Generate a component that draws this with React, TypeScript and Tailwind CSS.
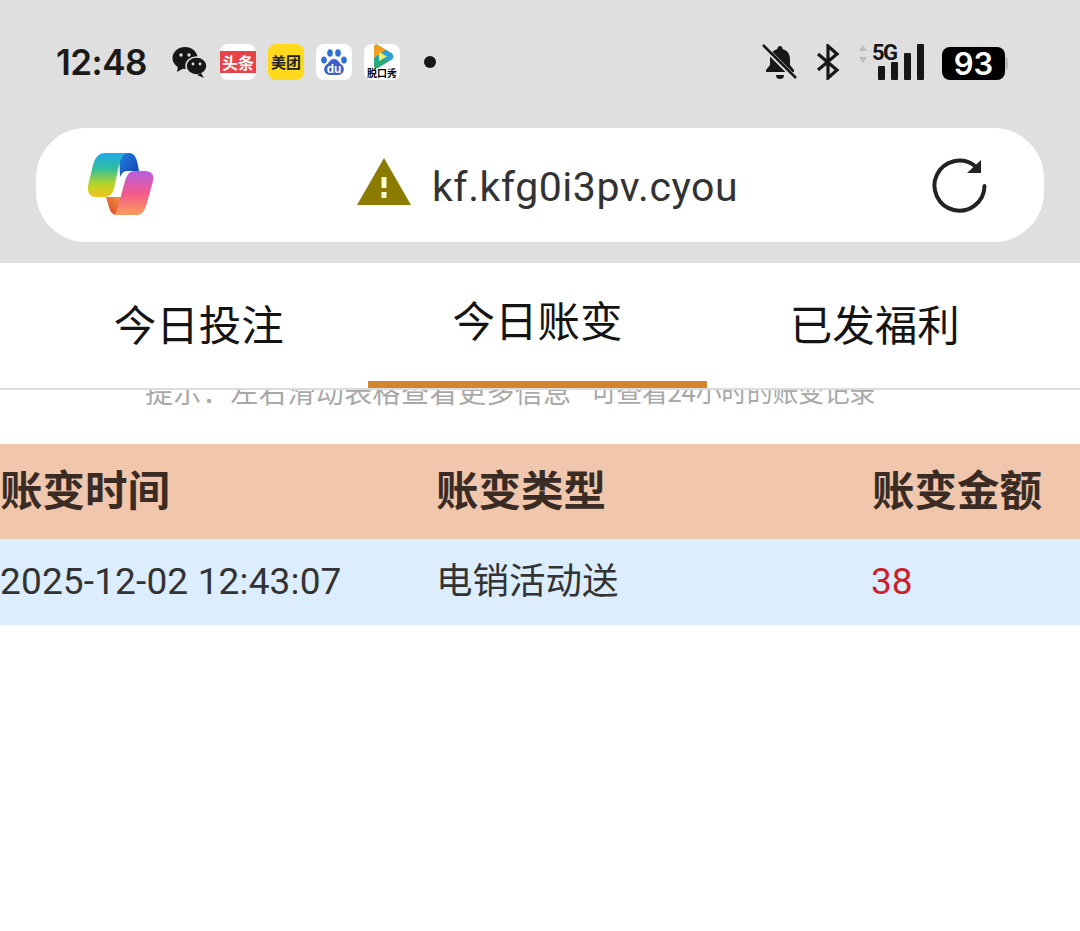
const cjk = "font-['Noto_Sans_CJK_SC','Noto_Sans',sans-serif]";

function WeChat() {
  return (
    <svg width="36" height="32" viewBox="0 0 36 32" fill="#171717">
      <ellipse cx="13" cy="12" rx="12.5" ry="11" />
      <path d="M6 20l-1 6 7-4z" />
      <ellipse cx="24.500" cy="20" rx="10.500" ry="9" fill="#171717" stroke="#dfdfdf" strokeWidth="1.500" />
      <path d="M29 27l3 5-7-3z" />
      <circle cx="9" cy="9" r="1.700" fill="#dfdfdf" />
      <circle cx="17" cy="9" r="1.700" fill="#dfdfdf" />
      <circle cx="21" cy="18" r="1.400" fill="#dfdfdf" />
      <circle cx="28" cy="18" r="1.400" fill="#dfdfdf" />
    </svg>
  );
}

function Baidu() {
  return (
    <div className="w-9 h-9 rounded-lg bg-white flex items-center justify-center">
      <svg width="30" height="30" viewBox="0 0 30 30">
        <ellipse cx="5" cy="13" rx="2.800" ry="3.500" fill="#2f6fd8" />
        <ellipse cx="11" cy="6" rx="2.800" ry="3.800" fill="#2f6fd8" />
        <ellipse cx="19" cy="6" rx="2.800" ry="3.800" fill="#2f6fd8" />
        <ellipse cx="25" cy="13" rx="2.800" ry="3.500" fill="#2f6fd8" />
        <path d="M15 12c4 0 4 3 8 6 4 4 1 10-4 10H11c-5 0-8-6-4-10 4-3 4-6 8-6z" fill="#3f5fc8" />
        <text x="15" y="26" textAnchor="middle" fontSize="12" fontWeight="700" fill="#fff" fontFamily="Liberation Sans">du</text>
      </svg>
    </div>
  );
}

function Tencent() {
  return (
    <div className="w-9 h-9 rounded-lg bg-white flex flex-col items-center overflow-hidden">
      <svg width="26" height="25" viewBox="0 0 26 25" className="shrink-0">
        <path d="M5 3c0-2 2-3 4-2l13 8c3 2 3 5 0 7L9 24c-2 1-4 0-4-2z" fill="#2aa87a" />
        <path d="M5 3c0-2 2-3 4-2l8 5-12 8z" fill="#f0a020" />
        <path d="M5 14l12-8 5 3c3 2 3 5 0 7z" fill="#2a9fd8" />
        <path d="M10 8l8 4.500-8 4.500z" fill="#e8f26a" />
      </svg>
      <span className={`${cjk} text-[10px] leading-[10px] font-bold text-black whitespace-nowrap -mt-[1px]`}>脱口秀</span>
    </div>
  );
}

function BellOff() {
  return (
    <svg width="36" height="36" viewBox="0 0 36 36" fill="#171717">
      <path d="M18 2a2.500 2.500 0 0 1 2.500 3c5 1.400 7.500 5.500 7.500 10v6l4 5v2H4v-2l4-5v-6c0-5 2.500-8.600 7.500-10A2.500 2.500 0 0 1 18 2z" />
      <path d="M14 31h8a4 4 0 0 1-8 0z" />
      <path d="M2 3l32 32" stroke="#dfdfdf" strokeWidth="5" />
      <path d="M1 1l33 33" stroke="#171717" strokeWidth="2.500" />
    </svg>
  );
}

function Bluetooth() {
  return (
    <svg width="24" height="36" viewBox="0 0 24 36" fill="none" stroke="#171717" strokeWidth="3.200">
      <path d="M2 10l19 16-9 8V2l9 8L2 26" />
    </svg>
  );
}

function Signal() {
  return (
    <div className="relative w-[68px] h-9">
      <svg className="absolute left-0 top-0" width="10" height="20" viewBox="0 0 10 20" fill="#bdbdbd">
        <path d="M5 1l4 6H1zM5 19l4-6H1z" />
      </svg>
      <span className="absolute left-[14px] top-[-4px] font-['Roboto',sans-serif] font-bold text-[22px] leading-[26px] text-[#171717] tracking-[-1.500px]">5G</span>
      <div className="absolute left-5 bottom-0 flex items-end gap-[6px]">
        <div className="w-[7px] h-[14px] bg-[#171717] rounded-[1px]" />
        <div className="w-[7px] h-[18px] bg-[#171717] rounded-[1px]" />
        <div className="w-[7px] h-[27px] bg-[#171717] rounded-[1px]" />
        <div className="w-[7px] h-9 bg-[#171717] rounded-[1px]" />
      </div>
    </div>
  );
}

function Copilot() {
  return (
    <svg width="68" height="64" viewBox="0 0 68 64">
      <defs>
        <linearGradient id="cl" x1="0" y1="0" x2="0" y2="1">
          <stop offset="0" stopColor="#1ea7ea" />
          <stop offset="0.35" stopColor="#2fbf9f" />
          <stop offset="0.7" stopColor="#b6d42a" />
          <stop offset="1" stopColor="#f0c419" />
        </linearGradient>
        <linearGradient id="cr" x1="0" y1="0" x2="0" y2="1">
          <stop offset="0" stopColor="#b75fe0" />
          <stop offset="0.5" stopColor="#f2598f" />
          <stop offset="1" stopColor="#fd9c5a" />
        </linearGradient>
        <linearGradient id="ct" x1="0" y1="0" x2="1" y2="1">
          <stop offset="0" stopColor="#1f7fe0" />
          <stop offset="1" stopColor="#1540b0" />
        </linearGradient>
        <linearGradient id="cb" x1="1" y1="0" x2="0" y2="1">
          <stop offset="0" stopColor="#f8a050" />
          <stop offset="1" stopColor="#d8401f" />
        </linearGradient>
      </defs>
      <path d="M32 0H42C48 0 50 5 52 18H40C36 18 34 22 33 24Z" fill="url(#ct)" />
      <path d="M19 44H34L38 62H30C25 62 23 58 22 54Z" fill="url(#cb)" />
      <path d="M18 0H42C36 0 34 5 32 12L27 36C25 42 22 44 17 44H9C3 44 0 39 1 33L6 12C8 4 12 0 18 0Z" fill="url(#cl)" />
      <path d="M36 20C38 18 42 18 46 18C42 20 41 24 40 28L36 44H20C26 42 28 38 30 30Z" fill="#fff" />
      <path d="M26 62H50C56 62 58 56 60 50L66 28C68 22 64 18 58 18H48C42 18 40 22 38 28L32 50C30 58 29 62 26 62Z" fill="url(#cr)" />
    </svg>
  );
}

function Warning() {
  return (
    <svg width="54" height="47" viewBox="0 0 54 47">
      <path d="M27 0l27 47H0z" fill="#8b7c00" />
      <rect x="24.500" y="19" width="5" height="11" fill="#fffbd0" />
      <rect x="24.500" y="34" width="5" height="6" fill="#fffbd0" />
    </svg>
  );
}

function Reload() {
  return (
    <svg width="56" height="56" viewBox="0 0 56 56" fill="none">
      <path d="M52.500 29a25 25 0 1 1-9.500-20" stroke="#222" strokeWidth="4" strokeLinecap="round" />
      <path d="M49 3v13H35z" fill="#222" />
    </svg>
  );
}

export default function App() {
  return (
    <div className="w-[1080px] h-[931px] bg-white overflow-hidden">
      <div className="bg-[#dfdfdf] h-[263px] px-9">
        <div className="h-[128px] flex items-start justify-between pt-[44px] pl-5 pr-[39px]">
          <div className="flex items-center h-9">
            <span className="font-['Inter',sans-serif] font-semibold text-[35px] leading-9 text-[#1a1a1a] tracking-[-0.5px] w-[116px]">12:48</span>
            <div className="w-12"><WeChat /></div>
            <div className="flex gap-3">
              <div className="w-9 h-9 rounded-lg bg-white flex items-center">
                <div className={`${cjk} w-full h-[22px] bg-[#e9434a] text-white text-[16px] leading-[22px] font-bold text-center`}>头条</div>
              </div>
              <div className={`${cjk} w-9 h-9 rounded-lg bg-[#ffd91a] text-[#222] text-[15px] leading-9 font-bold text-center`}>美团</div>
              <Baidu />
              <Tencent />
            </div>
            <div className="w-3 h-3 rounded-full bg-[#171717] ml-6" />
          </div>
          <div className="flex items-center h-9">
            <BellOff />
            <div className="ml-[18px]"><Bluetooth /></div>
            <div className="ml-[18px]"><Signal /></div>
            <div className="ml-4 relative w-[63px] h-[33px] mt-[2px] rounded-lg bg-black text-white font-['Inter',sans-serif] font-semibold text-[31px] leading-[34px] text-center">
              93
              <div className="absolute left-full top-[10px] w-[3px] h-[13px] rounded-r bg-[#bdbdbd]" />
            </div>
          </div>
        </div>
        <div className="h-[114px] bg-white rounded-[50px] flex items-center pl-[51px] pr-[56px]">
          <Copilot />
          <div className="flex-1 flex items-center pl-[202px] gap-[21px]">
            <div className="-mt-[8px]"><Warning /></div>
            <span className="font-['Roboto',sans-serif] text-[41px] leading-[50px] text-[#333] tracking-[0.55px] mt-[4px]">kf.kfg0i3pv.cyou</span>
          </div>
          <Reload />
        </div>
      </div>

      <div className={`${cjk} relative z-10 h-[127px] bg-white border-b-2 border-[#dcdcdc] pl-[30px] pr-[35px] grid grid-cols-3 text-[42.500px] text-[#141414]`}>
        <div className="h-[125px] flex items-center justify-center pb-[6px] pr-[1px]">今日投注</div>
        <div className="h-[125px] flex items-center justify-center pb-[7px] border-b-[7px] border-[#d2852c]">今日账变</div>
        <div className="h-[125px] flex items-center justify-center pb-[6px] pr-[2px]">已发福利</div>
      </div>

      <div className={`${cjk} -mt-[15px] h-[69px] flex pl-[145px] leading-[32px] text-[#a8a8a8] whitespace-nowrap`}>
        <span className="text-[28px] tracking-[0.45px]">提示：左右滑动表格查看更多信息</span>
        <span className="text-[26px] ml-[19px] tracking-[-0.4px]">可查看24小时的账变记录</span>
      </div>

      <div className={`${cjk} h-[95px] pb-[8px] bg-[#f0c6ac] grid grid-cols-[436px_436px_1fr] items-center text-[42.500px] leading-[56px] font-bold text-[#3a2c24]`}>
        <div>账变时间</div>
        <div>账变类型</div>
        <div>账变金额</div>
      </div>
      <div className="h-[86px] bg-[#dcedfd] grid grid-cols-[436px_436px_1fr] items-center text-[36px] leading-[48px] text-[#333] font-['Roboto','Noto_Sans_CJK_SC',sans-serif]">
        <div className="text-[37px] tracking-[0.15px] whitespace-nowrap">2025-12-02 12:43:07</div>
        <div className="text-[36.500px]">电销活动送</div>
        <div className="text-[#cc1f2c] -ml-[1px] text-[37px]">38</div>
      </div>
    </div>
  );
}
